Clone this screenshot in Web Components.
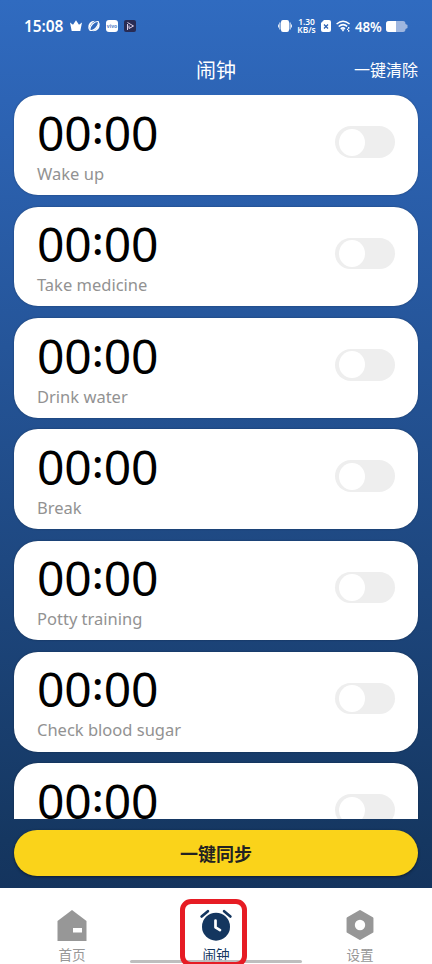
<!DOCTYPE html>
<html lang="zh-CN">
<head>
<meta charset="utf-8">
<title>闹钟</title>
<style>
html,body{margin:0;height:100%;overflow:hidden}
body{font-family:"Noto Sans","Noto Sans CJK SC",sans-serif}
</style>
</head>
<body>
<alarm-app></alarm-app>
<script>
const define = (name, html, setup) => customElements.define(name, class extends HTMLElement {
  connectedCallback() {
    if (this.shadowRoot) return;
    this.attachShadow({mode: 'open'}).innerHTML = html;
    if (setup) setup(this, this.shadowRoot);
  }
});

define('status-bar', `<style>
:host{display:flex;align-items:center;height:30px;padding:11px 24px 0;color:#fff;box-sizing:content-box}
svg{display:block;flex:none}
.time{font:600 15.5px/20px "Noto Sans",sans-serif;width:40px;white-space:nowrap;margin-right:6px;letter-spacing:-.1px}
.rate{font:600 8.4px/8px "Noto Sans",sans-serif;width:19px;text-align:center;white-space:nowrap;margin:0 5px 0 5px}
.pct{font:600 13.4px/18px "Noto Sans",sans-serif;width:28px;white-space:nowrap;margin:1px 3px 0 4px;letter-spacing:-.2px}
.vivo{font:700 5px/12px "Noto Sans",sans-serif;width:12px;height:12px;border-radius:3px;background:#fff;color:#5583c8;text-align:center;margin:0 6px}
.gap{flex:1}
</style>
<span class="time">15:08</span>
<svg width="12" height="12" viewBox="0 0 12 12" fill="#fff"><path d="M0 2.500l3 2.200L6 .3l3 4.400 3-2.200L10.300 11H1.700z"/></svg>
<svg style="margin-left:6px" width="12" height="12" viewBox="0 0 12 12"><path d="M.3 8Q0 1 7 .8 4 2.500 2.300 5.500 1.500 7.500 1.800 10.500.5 9.500.3 8Z" fill="#fff"/><path d="M11.700 4Q12 11 5 11.200 8 9.500 9.700 6.500 10.500 4.500 10.200 1.500 11.500 2.500 11.700 4Z" fill="#fff"/><path d="M2 10.300Q1.500 7 4.500 4 7.500 1 10.700 1.500M1.500 10Q4.500 11.500 7.500 8.500 10.500 5.500 10.500 2" fill="none" stroke="#fff" stroke-width="1.100"/></svg>
<span class="vivo">vivo</span>
<svg width="12" height="12" viewBox="0 0 12 12"><rect width="12" height="12" rx="2" fill="#282b54"/><path d="M3.500 2.500L9.500 6 5 8.500V5.500M3.500 4v6" fill="none" stroke="#ddd1eb" stroke-width="1"/></svg>
<span class="gap"></span>
<svg width="14" height="12" viewBox="0 0 14 12" fill="#fff"><rect x="3" width="8" height="12" rx="2"/><path d="M1.300 2.500h1.200v7H1.300zM11.500 2.500h1.200v7h-1.200zM0 4.500h1v3H0zM13 4.500h1v3h-1z" opacity=".85"/></svg>
<span class="rate">1.30<br>KB/s</span>
<svg width="10" height="12" viewBox="0 0 10 12"><path d="M3 0h5q2 0 2 2v8q0 2-2 2H2q-2 0-2-2V3z" fill="#fff"/><path d="M3 4.500l4 4m0-4l-4 4" stroke="#2b60b2" stroke-width="1.300"/></svg>
<svg style="margin-left:5px" width="15" height="12" viewBox="0 0 15 12" fill="none" stroke="#fff" stroke-width="1.500"><path d="M.6 4Q7 -1.500 13.600 4M2.700 6.500Q7 2.800 11.200 6.300M4.700 8.800Q7 7 9 8.800"/><path d="M5.300 9.300h3.400L7 11.700z" fill="#fff" stroke="none"/><path d="M12.700 7v1.800m0 1.200v1.800M11 9.300h1.200" stroke-width="1.300"/></svg>
<span class="pct">48%</span>
<svg width="22" height="11" viewBox="0 0 22 11"><path d="M3 0h14q2.500 0 2.500 3l2 1v3l-2 1q0 3-2.500 3H3Q0 11 0 8V3Q0 0 3 0Z" fill="#9eb6df"/><path d="M3 0h7v11H3Q0 11 0 8V3Q0 0 3 0Z" fill="#fff"/></svg>`);

define('page-header', `<style>
:host{display:grid;grid-template-columns:1fr auto 1fr;align-items:center;height:50px;padding:4px 14px 0;color:#fff;font-family:"Noto Sans CJK SC",sans-serif}
h1{grid-column:2;margin:0;font-size:20px;line-height:30px;font-weight:400}
span{justify-self:end;font-size:16px;line-height:24px;margin-bottom:3px}
</style><h1><slot></slot></h1><span><slot name="action"></slot></span>`);

define('toggle-switch', `<style>
:host{display:flex;box-sizing:border-box;width:60px;height:31.5px;border-radius:16px;background:#eee;padding:0 4px;align-items:center}
i{width:25.5px;height:27px;border-radius:50%;background:#fff}
</style><i></i>`);

define('alarm-card', `<style>
:host{display:flex;flex:none;box-sizing:border-box;height:99.7px;border-radius:24px;background:#fff;padding:0 23px 0 23px;justify-content:space-between;box-shadow:0 0 2px rgba(0,0,0,.35)}
.time{font-size:48px;line-height:50px;height:50px;margin-top:12.5px;color:#000;white-space:nowrap;display:flex}
.time span{letter-spacing:-.25px}
.time .colon{font-size:38px;font-weight:600;width:12.300px;display:flex;justify-content:center;line-height:43px}
.label{font-size:16.5px;line-height:22px;margin-top:5px;color:#929292;white-space:nowrap}
toggle-switch{margin-top:31px}
</style><div><div class="time"><span>00</span><span class="colon">:</span><span>00</span></div><div class="label"><slot></slot></div></div><toggle-switch></toggle-switch>`);

define('sync-button', `<style>
:host{display:flex;flex:none;height:46px;margin:11.5px 14px 12px;border-radius:23px;background:#fad31a;box-shadow:0 1px 3px rgba(0,0,0,.5);align-items:center;justify-content:center;font:700 18px/26px "Noto Sans CJK SC",sans-serif;color:#222}
</style><slot></slot>`);

define('tab-item', `<style>
:host{display:flex;flex-direction:column;align-items:center;width:144px;color:#979797;font:400 13.6px/20px "Noto Sans CJK SC",sans-serif}
:host([active]){color:#14365f}
.icon{height:36px;margin-top:19px;margin-bottom:1px}
</style><div class="icon"><slot name="icon"></slot></div><span><slot></slot></span>`);

define('tab-bar', `<style>
:host{display:flex;position:relative;flex:none;height:76px;background:#fff;overflow:hidden}
svg{display:block}
.mark{position:absolute;box-sizing:border-box;left:180px;top:11px;width:67px;height:68px;border:5px solid #e61c24;border-radius:11px}
.home{position:absolute;left:130px;bottom:1px;width:172px;height:3px;border-radius:2px;background:#bbb;opacity:.95}
</style>
<tab-item><svg slot="icon" width="32" height="36" viewBox="0 0 32 36"><path d="M16 3l14.500 11v20h-29V14z" fill="#979797"/><path d="M17 21h9v4.500h-9z" fill="#fff"/></svg>首页</tab-item>
<tab-item active><svg slot="icon" width="36" height="36" viewBox="0 0 36 36"><circle cx="18" cy="19.700" r="14" fill="#14365f"/><path d="M3.600 9.500l6.300-5.300M32.400 9.500l-6.300-5.300" stroke="#14365f" stroke-width="2.700" stroke-linecap="round"/><path d="M17.500 13.500v6.800l4.500 2.800" fill="none" stroke="#fff" stroke-width="2.700" stroke-linecap="round" stroke-linejoin="round"/></svg>闹钟</tab-item>
<tab-item><svg slot="icon" width="32" height="36" viewBox="0 0 32 36"><path d="M16 4.300l12.200 7v13.400l-12.200 7-12.200-7V11.300z" fill="#979797" stroke="#979797" stroke-width="2.500" stroke-linejoin="round"/><circle cx="16" cy="18" r="5.200" fill="#fff"/></svg>设置</tab-item>
<div class="home"></div><div class="mark"></div>`);

define('alarm-app', `<style>
:host{display:flex;flex-direction:column;width:432px;height:964px;overflow:hidden}
main{display:flex;flex-direction:column;flex:1;min-height:0;background:linear-gradient(#306bc0 0,#2d64b5 100px,#153761 840px,#14345e 888px)}
.list{display:flex;flex-direction:column;flex:1;min-height:0;gap:11.63px;overflow:hidden;padding:.4px 14px 0}
</style>
<main><status-bar></status-bar><page-header>闹钟<span slot="action">一键清除</span></page-header><section class="list"></section><sync-button>一键同步</sync-button></main><tab-bar></tab-bar>`, (host, root) => {
  for (const name of ['Wake up','Take medicine','Drink water','Break','Potty training','Check blood sugar','']) {
    const card = document.createElement('alarm-card');
    card.textContent = name;
    root.querySelector('.list').append(card);
  }
});
</script>
</body>
</html>
